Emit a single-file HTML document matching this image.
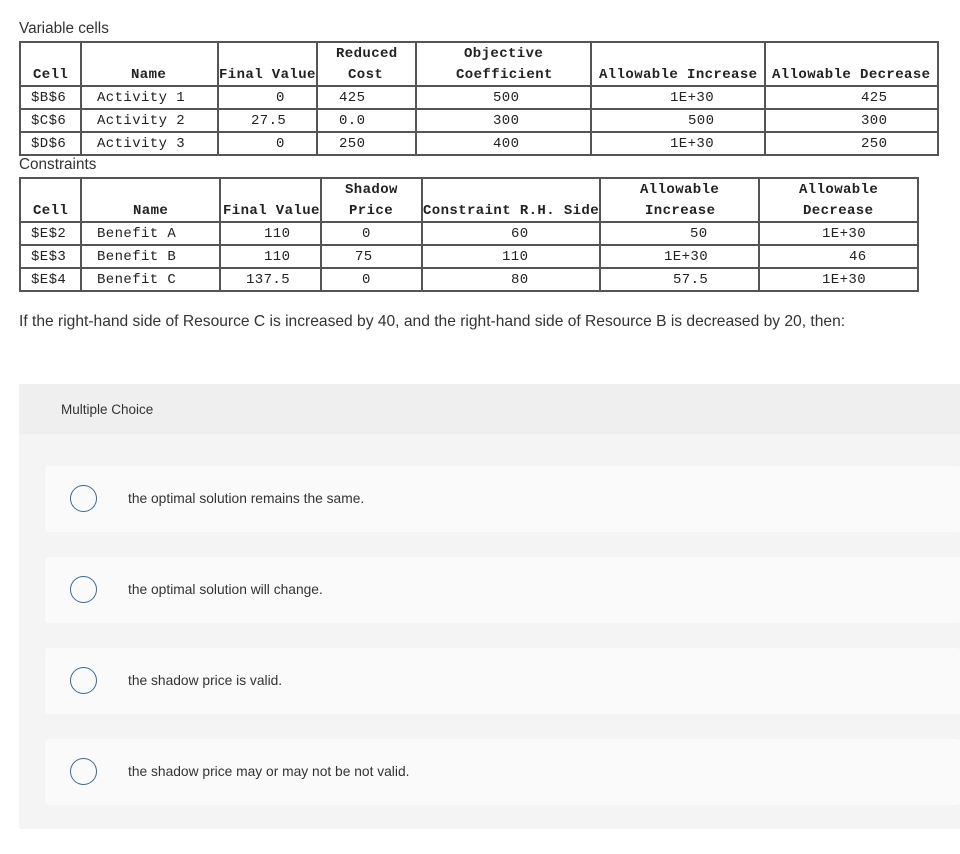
<!DOCTYPE html>
<html><head><meta charset="utf-8"><style>
body{margin:0;width:960px;height:854px;background:#fff;position:relative;font-family:"Liberation Sans",sans-serif;color:#333;overflow:hidden}
.a{position:absolute}
.t{position:absolute;font-family:"Liberation Mono",monospace;font-size:14px;letter-spacing:0.4px;color:#222;white-space:nowrap;line-height:16px}
.b{font-weight:bold}
.hl{position:absolute;height:2px;background:#555}
.vl{position:absolute;width:2px;background:#555}
.card{position:absolute;left:45px;width:915px;height:66px;background:#fafafa;border-radius:3px}
.rad{position:absolute;left:25px;top:19px;width:25px;height:25px;border:1.5px solid #3b6a96;border-radius:50%}
.ct{position:absolute;left:83px;top:25px;font-size:13.8px;color:#333}
</style></head><body>
<div class="a" style="left:19px;top:20px;font-size:15.3px;color:#333">Variable cells</div>
<div class="a" style="left:19px;top:156px;font-size:15.3px;color:#333">Constraints</div>

<div class="hl" style="left:19px;top:41px;width:920px"></div>
<div class="hl" style="left:19px;top:85px;width:920px"></div>
<div class="hl" style="left:19px;top:108px;width:920px"></div>
<div class="hl" style="left:19px;top:131px;width:920px"></div>
<div class="hl" style="left:19px;top:154px;width:920px"></div>
<div class="vl" style="left:19px;top:41px;height:115px"></div>
<div class="vl" style="left:80px;top:41px;height:115px"></div>
<div class="vl" style="left:217px;top:41px;height:115px"></div>
<div class="vl" style="left:316px;top:41px;height:115px"></div>
<div class="vl" style="left:415px;top:41px;height:115px"></div>
<div class="vl" style="left:590px;top:41px;height:115px"></div>
<div class="vl" style="left:764px;top:41px;height:115px"></div>
<div class="vl" style="left:937px;top:41px;height:115px"></div>

<div class="t b" style="left:33px;top:67px">Cell</div>
<div class="t b" style="left:131px;top:67px">Name</div>
<div class="t b" style="left:219px;top:67px">Final Value</div>
<div class="t b" style="left:336px;top:46px">Reduced</div>
<div class="t b" style="left:348px;top:67px">Cost</div>
<div class="t b" style="left:464px;top:46px">Objective</div>
<div class="t b" style="left:456px;top:67px">Coefficient</div>
<div class="t b" style="left:599px;top:67px">Allowable Increase</div>
<div class="t b" style="left:772px;top:67px">Allowable Decrease</div>

<div class="t" style="left:31px;top:90px">$B$6</div><div class="t" style="left:97px;top:90px">Activity 1</div><div class="t" style="left:276px;top:90px">0</div><div class="t" style="left:339px;top:90px">425</div><div class="t" style="left:493px;top:90px">500</div><div class="t" style="left:670px;top:90px">1E+30</div><div class="t" style="left:861px;top:90px">425</div>
<div class="t" style="left:31px;top:113px">$C$6</div><div class="t" style="left:251px;top:113px"></div><div class="t" style="left:97px;top:113px">Activity 2</div><div class="t" style="left:251px;top:113px">27.5</div><div class="t" style="left:339px;top:113px">0.0</div><div class="t" style="left:493px;top:113px">300</div><div class="t" style="left:688px;top:113px">500</div><div class="t" style="left:861px;top:113px">300</div>
<div class="t" style="left:31px;top:136px">$D$6</div><div class="t" style="left:97px;top:136px">Activity 3</div><div class="t" style="left:276px;top:136px">0</div><div class="t" style="left:339px;top:136px">250</div><div class="t" style="left:493px;top:136px">400</div><div class="t" style="left:670px;top:136px">1E+30</div><div class="t" style="left:861px;top:136px">250</div>

<div class="hl" style="left:19px;top:177px;width:900px"></div>
<div class="hl" style="left:19px;top:221px;width:900px"></div>
<div class="hl" style="left:19px;top:244px;width:900px"></div>
<div class="hl" style="left:19px;top:267px;width:900px"></div>
<div class="hl" style="left:19px;top:290px;width:900px"></div>
<div class="vl" style="left:19px;top:177px;height:115px"></div>
<div class="vl" style="left:80px;top:177px;height:115px"></div>
<div class="vl" style="left:219px;top:177px;height:115px"></div>
<div class="vl" style="left:320px;top:177px;height:115px"></div>
<div class="vl" style="left:421px;top:177px;height:115px"></div>
<div class="vl" style="left:599px;top:177px;height:115px"></div>
<div class="vl" style="left:758px;top:177px;height:115px"></div>
<div class="vl" style="left:917px;top:177px;height:115px"></div>

<div class="t b" style="left:33px;top:203px">Cell</div>
<div class="t b" style="left:133px;top:203px">Name</div>
<div class="t b" style="left:223px;top:203px">Final Value</div>
<div class="t b" style="left:345px;top:182px">Shadow</div>
<div class="t b" style="left:349px;top:203px">Price</div>
<div class="t b" style="left:423px;top:203px">Constraint R.H. Side</div>
<div class="t b" style="left:640px;top:182px">Allowable</div>
<div class="t b" style="left:645px;top:203px">Increase</div>
<div class="t b" style="left:799px;top:182px">Allowable</div>
<div class="t b" style="left:803px;top:203px">Decrease</div>

<div class="t" style="left:31px;top:226px">$E$2</div><div class="t" style="left:97px;top:226px">Benefit A</div><div class="t" style="left:264px;top:226px">110</div><div class="t" style="left:362px;top:226px">0</div><div class="t" style="left:511px;top:226px">60</div><div class="t" style="left:690px;top:226px">50</div><div class="t" style="left:822px;top:226px">1E+30</div>
<div class="t" style="left:31px;top:249px">$E$3</div><div class="t" style="left:97px;top:249px">Benefit B</div><div class="t" style="left:264px;top:249px">110</div><div class="t" style="left:355px;top:249px">75</div><div class="t" style="left:502px;top:249px">110</div><div class="t" style="left:664px;top:249px">1E+30</div><div class="t" style="left:849px;top:249px">46</div>
<div class="t" style="left:31px;top:272px">$E$4</div><div class="t" style="left:97px;top:272px">Benefit C</div><div class="t" style="left:246px;top:272px">137.5</div><div class="t" style="left:362px;top:272px">0</div><div class="t" style="left:511px;top:272px">80</div><div class="t" style="left:673px;top:272px">57.5</div><div class="t" style="left:822px;top:272px">1E+30</div>

<div class="a" style="left:19px;top:313px;font-size:15.6px;color:#333;white-space:nowrap">If the right-hand side of Resource C is increased by 40, and the right-hand side of Resource B is decreased by 20, then:</div>

<div class="a" style="left:19px;top:384px;width:941px;height:445px;background:#f4f4f4;border-radius:3px 0 0 3px"></div>
<div class="a" style="left:19px;top:384px;width:941px;height:50px;background:#efefef"></div>
<div class="a" style="left:61px;top:402px;font-size:13.5px;color:#333">Multiple Choice</div>

<div class="card" style="top:466px"><div class="rad"></div><div class="ct">the optimal solution remains the same.</div></div>
<div class="card" style="top:557px"><div class="rad"></div><div class="ct">the optimal solution will change.</div></div>
<div class="card" style="top:648px"><div class="rad"></div><div class="ct">the shadow price is valid.</div></div>
<div class="card" style="top:739px"><div class="rad"></div><div class="ct">the shadow price may or may not be not valid.</div></div>
</body></html>
